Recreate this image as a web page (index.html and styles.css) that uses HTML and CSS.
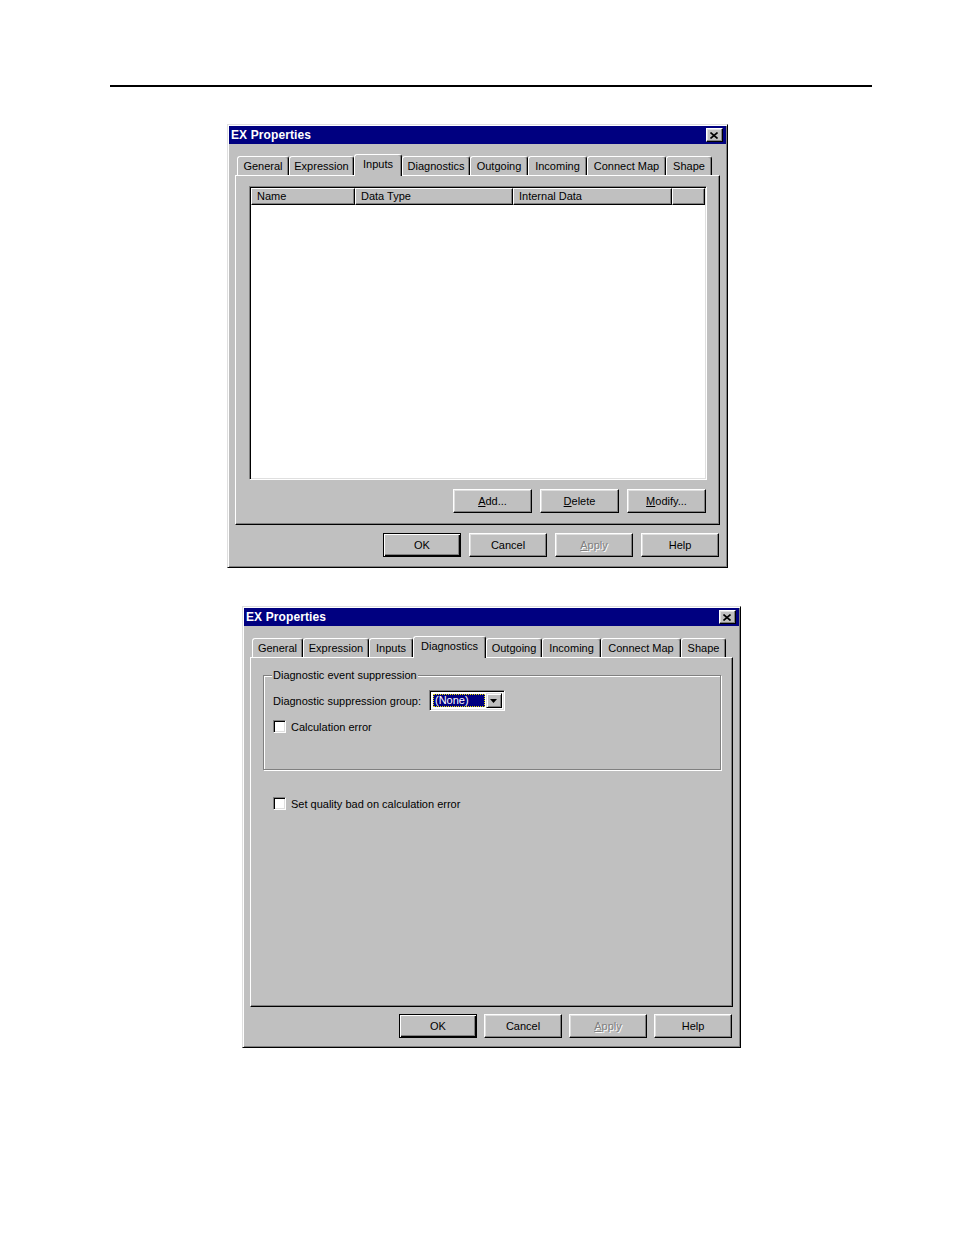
FILE: index.html
```html
<!DOCTYPE html>
<html>
<head>
<meta charset="utf-8">
<title>EX Properties</title>
<link rel="stylesheet" href="styles.css">
</head>
<body>
<div class="page">
  <div class="rule"></div>

  <div class="dlg dlg1">
    <div class="title">
      <span class="title-text">EX Properties</span>
      <span class="close"><svg width="8" height="7" viewBox="0 0 8 7"><path d="M0.5 0.5L7.5 6.5M7.5 0.5L0.5 6.5" stroke="#000" stroke-width="1.6" fill="none"/></svg></span>
    </div>
    <div class="dlg-body">
      <div class="tabs">
        <div class="tab" style="width:52px">General</div>
        <div class="tab" style="width:65px">Expression</div>
        <div class="tab sel" style="width:48px">Inputs</div>
        <div class="tab" style="width:68px">Diagnostics</div>
        <div class="tab" style="width:58px">Outgoing</div>
        <div class="tab" style="width:59px">Incoming</div>
        <div class="tab" style="width:79px">Connect Map</div>
        <div class="tab" style="width:46px">Shape</div>
      </div>
      <div class="panel">
        <div class="listview">
          <div class="lv-head">
            <div class="hcell c1">Name</div>
            <div class="hcell c2">Data Type</div>
            <div class="hcell c3">Internal Data</div>
            <div class="hcell c4"></div>
          </div>
        </div>
        <div class="lv-buttons">
          <div class="btn"><span><u>A</u>dd...</span></div>
          <div class="btn"><span><u>D</u>elete</span></div>
          <div class="btn"><span><u>M</u>odify...</span></div>
        </div>
      </div>
      <div class="footer">
        <div class="btn default">OK</div>
        <div class="btn">Cancel</div>
        <div class="btn disabled"><span><u>A</u>pply</span></div>
        <div class="btn">Help</div>
      </div>
    </div>
  </div>

  <div class="dlg dlg2">
    <div class="title">
      <span class="title-text">EX Properties</span>
      <span class="close"><svg width="8" height="7" viewBox="0 0 8 7"><path d="M0.5 0.5L7.5 6.5M7.5 0.5L0.5 6.5" stroke="#000" stroke-width="1.6" fill="none"/></svg></span>
    </div>
    <div class="dlg-body">
      <div class="tabs">
        <div class="tab" style="width:51px">General</div>
        <div class="tab" style="width:66px">Expression</div>
        <div class="tab" style="width:44px">Inputs</div>
        <div class="tab sel" style="width:73px">Diagnostics</div>
        <div class="tab" style="width:56px">Outgoing</div>
        <div class="tab" style="width:59px">Incoming</div>
        <div class="tab" style="width:80px">Connect Map</div>
        <div class="tab" style="width:45px">Shape</div>
      </div>
      <div class="panel">
        <div class="group">
          <div class="group-label">Diagnostic event suppression</div>
          <div class="row combo-row">
            <span>Diagnostic suppression group:</span>
            <div class="combo">
              <div class="combo-field"><span class="combo-text">(None)</span></div>
              <div class="combo-btn"><svg width="7" height="4" viewBox="0 0 7 4"><polygon points="0,0 7,0 3.5,4" fill="#000"/></svg></div>
            </div>
          </div>
          <div class="row check-row">
            <span class="check"></span>
            <span>Calculation error</span>
          </div>
        </div>
        <div class="row check-row solo">
          <span class="check"></span>
          <span>Set quality bad on calculation error</span>
        </div>
      </div>
      <div class="footer f2">
        <div class="btn default">OK</div>
        <div class="btn">Cancel</div>
        <div class="btn disabled"><span><u>A</u>pply</span></div>
        <div class="btn">Help</div>
      </div>
    </div>
  </div>
</div>
</body>
</html>
```

FILE: styles.css
```css
* { box-sizing: border-box; }

body {
  margin: 0;
  background: #fff;
  font-family: "Liberation Sans", Arial, sans-serif;
  font-size: 11px;
  color: #000;
}

.page { padding-top: 85px; }

.rule {
  margin-left: 110px;
  width: 762px;
  height: 2px;
  background: #000;
}

.dlg {
  background: #c0c0c0;
  border: 1px solid;
  border-color: #dfdfdf #000 #000 #dfdfdf;
  box-shadow: inset 1px 1px #fff, inset -1px -1px #808080;
  padding: 1px;
  display: flex;
  flex-direction: column;
}

.dlg1 { margin: 37px 0 0 227px; width: 501px; height: 444px; }
.dlg2 { margin: 38px 0 0 242px; width: 499px; height: 442px; }

.title {
  height: 18px;
  background: #000080;
  color: #fff;
  display: flex;
  align-items: center;
  justify-content: space-between;
  padding: 0 3px 0 2px;
  flex: none;
}

.title-text {
  font-weight: bold;
  font-size: 12px;
  letter-spacing: 0.1px;
}

.close {
  width: 17px;
  height: 14px;
  background: #c0c0c0;
  border: 1px solid;
  border-color: #fff #000 #000 #fff;
  box-shadow: inset -1px -1px #808080, inset 1px 1px #dfdfdf;
  display: flex;
  align-items: center;
  justify-content: center;
}
.close svg { display: block; margin-left: -1px; }

.dlg-body { padding: 10px 6px 0 6px; }

.tabs {
  display: flex;
  align-items: flex-end;
  height: 21px;
  padding-left: 2px;
}

.tab {
  height: 19px;
  flex: none;
  border: 1px solid;
  border-bottom: none;
  border-color: #fff #000 transparent #fff;
  border-radius: 3px 3px 0 0;
  box-shadow: inset -1px 0 #808080;
  background: #c0c0c0;
  text-align: center;
  padding-top: 2px;
  line-height: 14px;
  white-space: nowrap;
}

.tab.sel {
  height: 22px;
  margin-bottom: -1px;
  position: relative;
  z-index: 1;
}

.panel {
  height: 350px;
  border: 1px solid;
  border-color: #fff #000 #000 #fff;
  box-shadow: inset -1px -1px #808080;
  overflow: hidden;
}

/* list view */
.listview {
  margin: 10px 12px 0 13px;
  height: 294px;
  background: #fff;
  border: 1px solid;
  border-color: #808080 #fff #fff #808080;
  box-shadow: inset 1px 1px #000, inset -1px -1px #dfdfdf;
  padding: 1px;
}

.lv-head { display: flex; height: 17px; }

.hcell {
  flex: none;
  background: #c0c0c0;
  border: 1px solid;
  border-color: #fff #000 #000 #fff;
  box-shadow: inset -1px -1px #808080;
  padding-left: 5px;
  line-height: 15px;
  white-space: nowrap;
}
.c1 { width: 104px; }
.c2 { width: 158px; }
.c3 { width: 159px; }
.c4 { flex: 1; }

.lv-buttons {
  display: flex;
  justify-content: flex-end;
  gap: 8px;
  margin: 9px 13px 0 0;
}

.btn {
  flex: none;
  width: 78px;
  height: 24px;
  background: #c0c0c0;
  border: 1px solid;
  border-color: #fff #000 #000 #fff;
  box-shadow: inset -1px -1px #808080, inset 1px 1px #dfdfdf;
  display: flex;
  align-items: center;
  justify-content: center;
  padding-bottom: 1px;
}
.lv-buttons .btn { width: 79px; }

.btn.default {
  border-color: #000;
  box-shadow: inset 1px 1px #fff, inset -1px -1px #000, inset -2px -2px #808080;
}

.btn.disabled {
  color: #808080;
  text-shadow: 1px 1px 0 #fff;
}

.footer {
  display: flex;
  justify-content: flex-end;
  gap: 8px;
  margin-top: 8px;
  margin-right: 1px;
}
.footer.f2 { gap: 7px; margin-top: 7px; }

/* group box */
.group {
  margin: 17px 11px 0 12px;
  height: 95px;
  border: 1px solid #808080;
  box-shadow: inset 1px 1px #fff, 1px 1px #fff;
  padding-left: 9px;
}

.group-label {
  width: fit-content;
  margin: -7px 0 0 -1px;
  padding: 0 1px;
  height: 13px;
  line-height: 13px;
  background: #c0c0c0;
}

.row {
  display: flex;
  align-items: center;
}

.combo-row {
  margin-top: 8px;
  gap: 8px;
}

.combo {
  width: 76px;
  height: 21px;
  background: #fff;
  border: 1px solid;
  border-color: #808080 #fff #fff #808080;
  box-shadow: inset 1px 1px #000, inset -1px -1px #dfdfdf;
  padding: 2px;
  display: flex;
}

.combo-field {
  flex: 1;
  padding: 1px;
}

.combo-text {
  display: block;
  height: 100%;
  background: #000080;
  color: #fff;
  outline: 1px dotted #e8e000;
  outline-offset: -1px;
  padding-left: 2px;
  line-height: 13px;
}

.combo-btn {
  width: 16px;
  flex: none;
  background: #c0c0c0;
  border: 1px solid;
  border-color: #dfdfdf #000 #000 #dfdfdf;
  box-shadow: inset 1px 1px #fff, inset -1px -1px #808080;
  display: flex;
  align-items: center;
  justify-content: center;
}
.combo-btn svg { display: block; }

.check-row {
  margin-top: 9px;
  gap: 5px;
}

.check-row.solo {
  margin: 27px 0 0 22px;
}

.check {
  flex: none;
  width: 13px;
  height: 13px;
  background: #fff;
  border: 1px solid;
  border-color: #808080 #fff #fff #808080;
  box-shadow: inset 1px 1px #000, inset -1px -1px #dfdfdf;
}
```
